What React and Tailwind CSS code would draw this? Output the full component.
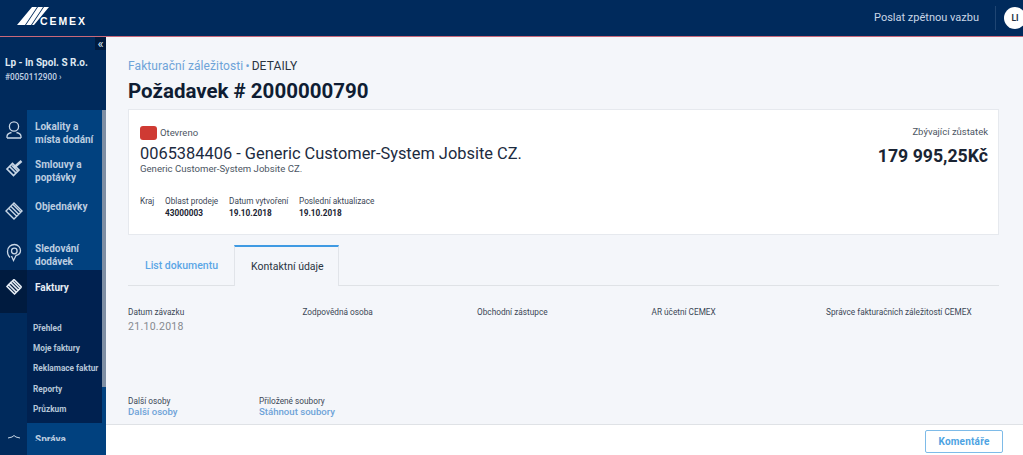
const LOGO = (
  <svg width="34" height="18" viewBox="0 0 34 18" className="block shrink-0">
    <path d="M1 18 L16 0 H21 L9 18 Z M10 18 L22 0 H27 L15 18 Z M16 18 L28 0 H33 L18 18 Z" fill="#fff" />
  </svg>
);

function Icon({ kind }) {
  const common = { width: 20, height: 20, viewBox: "0 0 20 20", fill: "none", stroke: "#c9d7e6", strokeWidth: 1.3 };
  if (kind === "user")
    return (
      <svg {...common}>
        <circle cx="10" cy="6.5" r="4.6" />
        <path d="M3 18 v-1.5 c0-2.5 2-3.5 4.5-4 M17 18 v-1.5 c0-2.5-2-3.5-4.5-4 M3 18 H17" />
      </svg>
    );
  if (kind === "contract")
    return (
      <svg {...common} strokeWidth="1.7">
        <path d="M3 11 L8.5 5.5 L15 12 L9.5 17.5 Z M6 9 l6 6 M8 7.5 l5.5 5.5" />
        <path d="M10 9.5 L17.5 3" strokeWidth="2.6" />
      </svg>
    );
  if (kind === "orders")
    return (
      <svg {...common} strokeWidth="1.4">
        <path d="M2 10 L10 2 L18 10 L10 18 Z M5 7.5 l7.5 7.5 M7 5.5 l7.5 7.5 M9 3.5 l7.5 7.5" />
      </svg>
    );
  if (kind === "track")
    return (
      <svg {...common}>
        <path d="M6 15.5 C4 13.5 3.5 11.5 3.5 9.5 C3.5 5 7 2.5 10.5 2.5 C14 2.5 16.5 5.5 16.5 8.5 C16.5 11.5 14.5 13 12 13.5 L9.5 18.5 L7.5 14" />
        <circle cx="10.3" cy="9" r="2.8" />
      </svg>
    );
  if (kind === "bills")
    return (
      <svg {...common} stroke="#e6edf5" strokeWidth="1.7">
        <path d="M6 5 L14.5 13.5 M4 7 L12.5 15.5 M8 3.5 L16 11.5 M3 9.5 L10 16.5 M10 2.5 L17.5 10 M10 2.5 L2.5 10 M10 17.5 L17.5 10" />
      </svg>
    );
  return (
    <svg width="16" height="6" viewBox="0 0 16 6" fill="none" stroke="#c9d7e6" strokeWidth="1">
      <path d="M2 4 L6 3 L8 1.5 L10 3 L14 4" />
    </svg>
  );
}

function NavItem({ icon, children, h, pt, iconPt }) {
  return (
    <div className={`flex ${h}`}>
      <div className={`w-[27px] flex justify-center ${iconPt}`}>
        <Icon kind={icon} />
      </div>
      <div className={`flex-1 bg-[#01417f] pl-[8px] ${pt} text-[10px] leading-[13px] font-bold text-[#bccde0] overflow-hidden`}>
        {children}
      </div>
    </div>
  );
}

function Field({ label, value, className = "" }) {
  return (
    <div className={className}>
      <div className="text-[8.25px] leading-[11px] text-[#3b4656]">{label}</div>
      <div className="text-[8.25px] leading-[12px] font-bold text-[#1a2433]">{value}</div>
    </div>
  );
}

function Col({ children, className = "" }) {
  return <div className={`text-[8.25px] leading-[11px] text-[#3b4656] ${className}`}>{children}</div>;
}

export default function App() {
  return (
    <div className="relative flex flex-col w-[1023px] h-[455px] overflow-hidden bg-white font-['Roboto',sans-serif]">
      <header className="flex items-start h-[37px] shrink-0 bg-[#002a5c] border-b border-b-[#c9687a]">
        <div className="flex items-start pl-[16px] pt-[7px] w-[200px]">
          {LOGO}
          <span className="ml-[-10px] mt-[10px] text-[10.5px] leading-[9px] font-bold tracking-[1.9px] text-white font-['Liberation_Sans',sans-serif]">
            CEMEX
          </span>
        </div>
        <div className="ml-auto flex items-center h-full">
          <span className="text-[11px] text-[#c9d6e6]">Poslat zpětnou vazbu</span>
          <div className="ml-[16px] w-px h-[24px] bg-[#1f4573]" />
          <div className="ml-[8px] mr-[-3px] w-[22px] h-[22px] rounded-full bg-white flex items-center justify-center text-[8.5px] font-bold text-[#22303f]">
            LI
          </div>
        </div>
      </header>

      <div className="flex flex-1 min-h-0">
        <aside className="relative w-[106px] shrink-0 bg-[#002a5c] overflow-hidden">
          <div className="absolute top-0 right-0 w-[11px] h-[13px] bg-[#001b3f] flex items-center justify-center text-[13px] leading-[13px] text-[#dfe8f2]">
            «
          </div>
          <div className="pl-[5px] pt-[19px] h-[73px]">
            <div className="text-[10px] leading-[13px] font-bold text-[#dfe8f2]">Lp - In Spol. S R.o.</div>
            <div className="mt-[3px] text-[8.25px] leading-[11px] font-medium text-[#c4d3e4]">#0050112900 ›</div>
          </div>
          <div className="relative pr-[4px]">
            <NavItem icon="user" h="h-[38px]" pt="pt-[10px]" iconPt="pt-[10px]">Lokality a<br />místa dodání</NavItem>
            <NavItem icon="contract" h="h-[42px]" pt="pt-[10px]" iconPt="pt-[10px]">Smlouvy a<br />poptávky</NavItem>
            <NavItem icon="orders" h="h-[42px]" pt="pt-[10px]" iconPt="pt-[11px]">Objednávky</NavItem>
            <NavItem icon="track" h="h-[38px]" pt="pt-[10px]" iconPt="pt-[10px]">Sledování<br />dodávek</NavItem>
            <div className="flex">
              <div className="w-[27px]">
                <div className="h-[43px] bg-[#001b3f] flex justify-center pt-[7px]">
                  <Icon kind="bills" />
                </div>
              </div>
              <div className="flex-1 bg-[#002150] h-[153px]">
                <div className="pl-[8px] pt-[11px] text-[10px] leading-[13px] font-bold text-[#e6edf5]">Faktury</div>
                <div className="pl-[6px] pt-[24px] flex flex-col text-[8.25px] leading-[20.2px] font-bold text-[#b6c6d8] whitespace-nowrap overflow-hidden">
                  <span>Přehled</span>
                  <span>Moje faktury</span>
                  <span>Reklamace faktur</span>
                  <span>Reporty</span>
                  <span>Průzkum</span>
                </div>
              </div>
            </div>
            <div className="h-[18px] flex overflow-hidden">
              <div className="w-[27px] flex justify-center pt-[11px]">
                <Icon kind="other" />
              </div>
              <div className="flex-1 bg-[#01417f] pl-[8px] pt-[10px] text-[10px] leading-[13px] font-bold text-[#bccde0]">
                Správa
              </div>
            </div>
            <div className="h-[40px] flex">
              <div className="w-[27px]" />
              <div className="flex-1 bg-[#01417f]" />
            </div>
            <div className="absolute inset-y-0 right-0 w-[4px] bg-[#01417f]">
              <div className="h-[277px] bg-[#7e8ea3]" />
            </div>
          </div>
        </aside>

        <div className="flex-1 min-w-0 flex flex-col">
          <main className="h-[388px] shrink-0 bg-[#f4f6fa] px-[22px] pr-[24px] overflow-hidden border-b border-b-[#dfe2e6]">
            <div className="pt-[22px] text-[12px] leading-[14px] tracking-[0.1px]">
              <span className="text-[#6ea3d8]">Fakturační záležitosti</span>
              <span className="text-[#6ea3d8] mx-[-1px]"> • </span>
              <span className="text-[#2a3442]">DETAILY</span>
            </div>
            <h1 className="mt-[6px] text-[20.5px] leading-[24px] font-bold text-[#0f1d33]">Požadavek # 2000000790</h1>
            <section className="mt-[6px] h-[126px] bg-white border border-[#e6e9ee] flex justify-between pl-[11px] pr-[10px]">
              <div>
                <div className="pt-[16px] flex items-center">
                  <span className="w-[17px] h-[14px] rounded-[3px] bg-[#cf3a33]" />
                  <span className="ml-[3px] text-[9.5px] leading-[14px] text-[#4c5663]">Otevreno</span>
                </div>
                <div className="mt-[4px] text-[16.4px] leading-[20px] text-[#1c2b40]">
                  0065384406 - Generic Customer-System Jobsite CZ.
                </div>
                <div className="mt-[-1px] text-[9.6px] leading-[11px] text-[#4c5663]">Generic Customer-System Jobsite CZ.</div>
                <div className="mt-[22px] flex">
                  <Field className="w-[25px]" label="Kraj" value="" />
                  <Field className="w-[64px]" label="Oblast prodeje" value="43000003" />
                  <Field className="w-[70px]" label="Datum vytvoření" value="19.10.2018" />
                  <Field label="Poslední aktualizace" value="19.10.2018" />
                </div>
              </div>
              <div className="text-right">
                <div className="pt-[15px] text-[9.5px] leading-[13px] text-[#4c5663]">Zbývající zůstatek</div>
                <div className="mt-[6px] text-[17.7px] leading-[24px] font-bold text-[#1a2433]">179 995,25Kč</div>
              </div>
            </section>
            <div className="mt-[10px] flex h-[41px] border-b border-[#dfe2e6]">
              <div className="w-[106px] pl-[17px] pt-[14px] text-[10.5px] leading-[14px] font-medium text-[#5ba6e6]">List dokumentu</div>
              <div className="w-[105px] h-[41px] border-t-2 border-t-[#3f9ae3] border-x border-x-[#e1e4e9] bg-[#f4f6fa] pl-[16px] pt-[13px] text-[10.5px] leading-[14px] text-[#2a3442]">
                Kontaktní údaje
              </div>
            </div>
            <div className="mt-[21px] grid grid-cols-[174.5px_174.5px_174.5px_174.5px_1fr] h-[89px]">
              <Col>
                Datum závazku
                <div className="mt-[2px] text-[10.5px] leading-[13px] tracking-[0.3px] text-[#85898f]">21.10.2018</div>
              </Col>
              <Col>Zodpovědná osoba</Col>
              <Col>Obchodní zástupce</Col>
              <Col>AR účetní CEMEX</Col>
              <Col className="whitespace-nowrap">Správce fakturačních záležitostí CEMEX</Col>
            </div>
            <div className="flex">
              <div className="w-[131px]">
                <div className="text-[8.25px] leading-[11px] text-[#3b4656]">Další osoby</div>
                <div className="text-[9.6px] leading-[10px] font-medium text-[#6ea3d8]">Další osoby</div>
              </div>
              <div>
                <div className="text-[8.25px] leading-[11px] text-[#3b4656]">Přiložené soubory</div>
                <div className="text-[9.6px] leading-[10px] font-medium text-[#6ea3d8]">Stáhnout soubory</div>
              </div>
            </div>
          </main>
          <footer className="flex-1 bg-white flex justify-end items-start pr-[20px] pt-[5px]">
            <button className="w-[78px] h-[23px] border border-[#7ebbe8] rounded-[2px] text-[10px] font-bold tracking-[0.2px] text-[#4ea3e2]">
              Komentáře
            </button>
          </footer>
        </div>
      </div>
    </div>
  );
}
